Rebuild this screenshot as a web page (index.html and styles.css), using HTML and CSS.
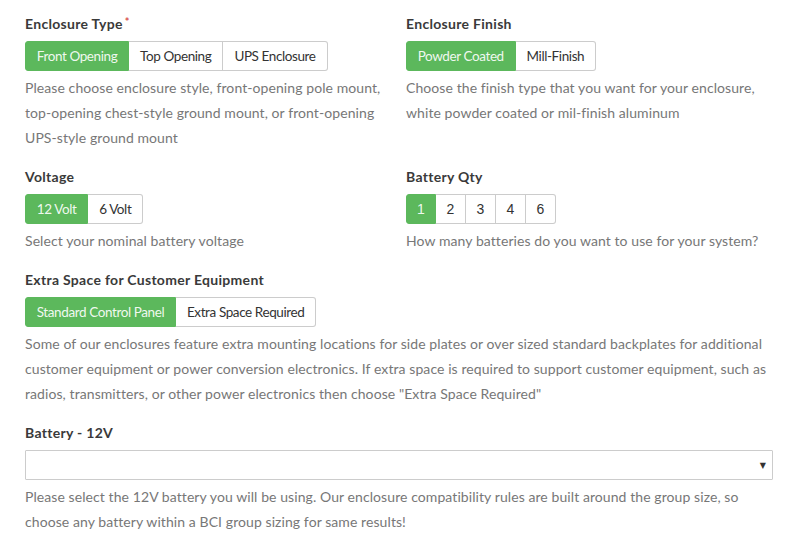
FILE: index.html
```html
<!DOCTYPE html>
<html>
<head>
<meta charset="utf-8">
<link rel="stylesheet" href="styles.css">
</head>
<body>
<div class="form">
  <div class="row">
    <div class="col">
      <div class="label">Enclosure Type<span class="req">*</span></div>
      <div class="btn-group">
        <span class="btn active">Front Opening</span><span class="btn">Top Opening</span><span class="btn">UPS Enclosure</span>
      </div>
      <p class="help">Please choose enclosure style, front-opening pole mount, top-opening chest-style ground mount, or front-opening UPS-style ground mount</p>
    </div>
    <div class="col">
      <div class="label">Enclosure Finish</div>
      <div class="btn-group">
        <span class="btn active">Powder Coated</span><span class="btn">Mill-Finish</span>
      </div>
      <p class="help">Choose the finish type that you want for your enclosure, white powder coated or mil-finish aluminum</p>
    </div>
  </div>
  <div class="row">
    <div class="col">
      <div class="label">Voltage</div>
      <div class="btn-group">
        <span class="btn active">12 Volt</span><span class="btn">6 Volt</span>
      </div>
      <p class="help">Select your nominal battery voltage</p>
    </div>
    <div class="col">
      <div class="label">Battery Qty</div>
      <div class="btn-group">
        <span class="btn num active">1</span><span class="btn num">2</span><span class="btn num">3</span><span class="btn num">4</span><span class="btn num">6</span>
      </div>
      <p class="help">How many batteries do you want to use for your system?</p>
    </div>
  </div>
  <div class="group">
    <div class="label">Extra Space for Customer Equipment</div>
    <div class="btn-group">
      <span class="btn active">Standard Control Panel</span><span class="btn">Extra Space Required</span>
    </div>
    <p class="help">Some of our enclosures feature extra mounting locations for side plates or over sized standard backplates for additional customer equipment or power conversion electronics. If extra space is required to support customer equipment, such as radios, transmitters, or other power electronics then choose "Extra Space Required"</p>
  </div>
  <div class="group">
    <div class="label">Battery - 12V</div>
    <div class="select"><span class="arrow">&#9660;</span></div>
    <p class="help">Please select the 12V battery you will be using. Our enclosure compatibility rules are built around the group size, so choose any battery within a BCI group sizing for same results!</p>
  </div>
</div>
</body>
</html>
```
FILE: styles.css
```css
html, body {
  margin: 0;
  padding: 0;
  background: #fff;
}
body {
  font-family: Lato, "Open Sans", sans-serif;
  color: #333;
}
.form {
  padding: 14px 0 0 25px;
  width: 748px;
}
.row {
  display: flex;
  gap: 21px;
}
.col {
  width: 360px;
  flex: none;
}
.col + .col {
  width: 367px;
}
.label {
  font-size: 14px;
  font-weight: bold;
  line-height: 20px;
  letter-spacing: 0.3px;
  color: #3a3a3a;
  margin-bottom: 7px;
}
.req {
  color: #d9534f;
  font-size: 11px;
  line-height: 0;
  vertical-align: 3px;
  margin-left: 2px;
}
.btn-group {
  display: flex;
}
.btn {
  height: 30px;
  box-sizing: border-box;
  display: flex;
  align-items: center;
  padding: 0 11px;
  font-size: 13.5px;
  letter-spacing: -0.4px;
  color: #333;
  background: #fff;
  border: 1px solid #ccc;
  border-left-width: 0;
}
.btn:first-child {
  border-left-width: 1px;
  border-radius: 3px 0 0 3px;
}
.btn:last-child {
  border-radius: 0 3px 3px 0;
}
.btn.active {
  background: #5cb85c;
  border-color: #5cb85c;
  color: rgba(255, 255, 255, 0.92);
  padding: 0 10.75px;
}
.btn.num {
  width: 30px;
  justify-content: center;
  padding: 0;
  font-family: "Liberation Sans", Arial, sans-serif;
  font-size: 14px;
  letter-spacing: 0;
}
.help {
  margin: 4px 0 17px;
  font-size: 14px;
  line-height: 25px;
  letter-spacing: 0.08px;
  color: #777;
}
.select {
  height: 30px;
  box-sizing: border-box;
  border: 1px solid #ccc;
  border-radius: 1px;
  display: flex;
  align-items: center;
  justify-content: flex-end;
  padding-right: 6px;
}
.arrow {
  font-size: 8px;
  color: #333;
  font-family: "DejaVu Sans", sans-serif;
}
```
